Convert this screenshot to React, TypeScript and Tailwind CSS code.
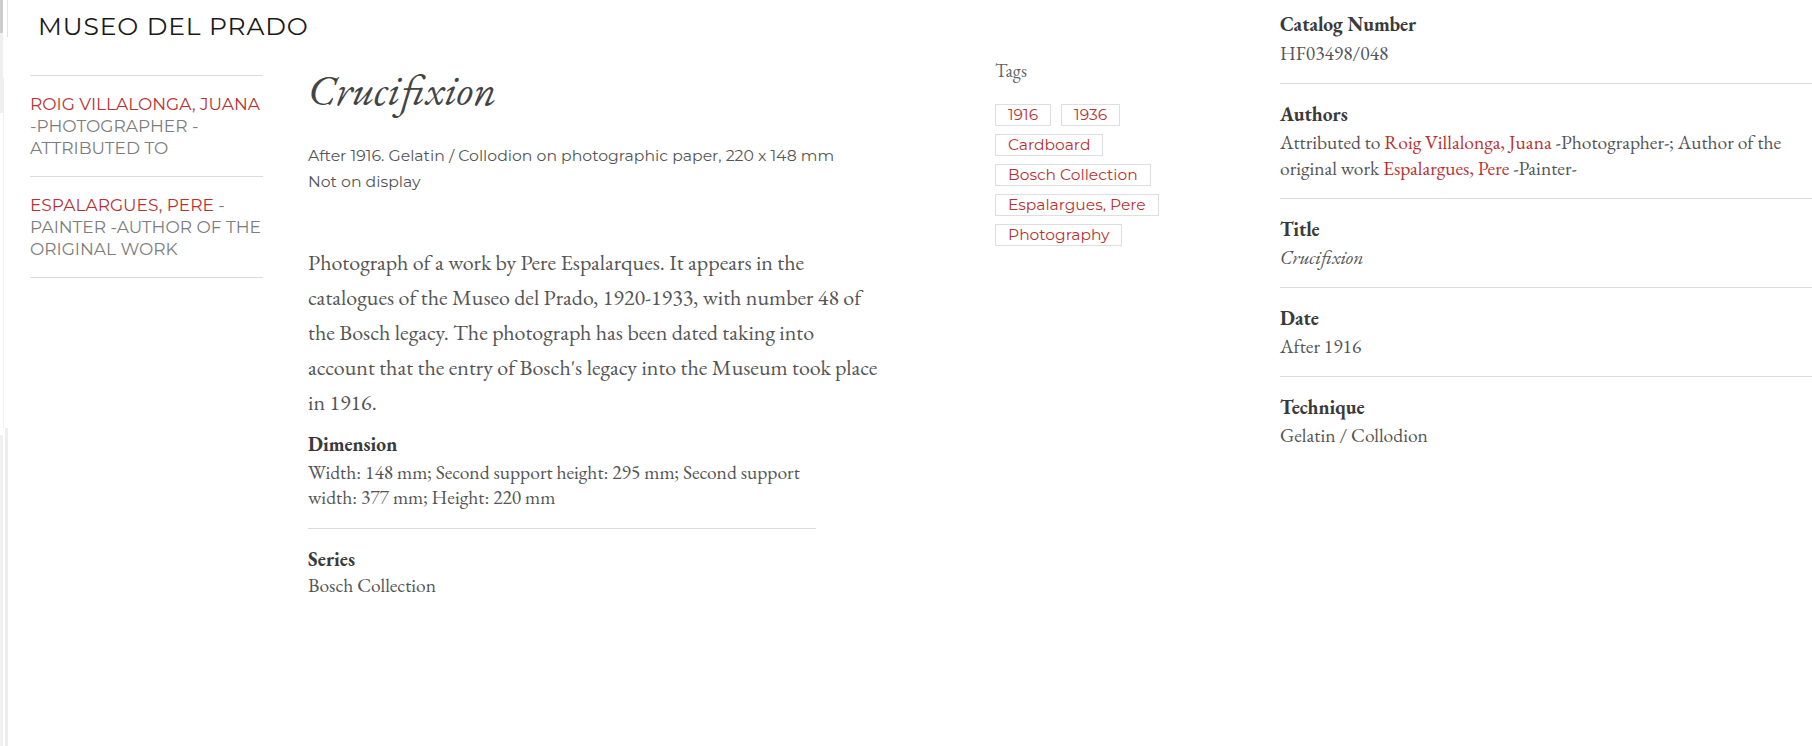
import React from "react";

const SANS = "font-['Montserrat','Noto_Sans',sans-serif]";
const SERIF = "font-['EB_Garamond','Liberation_Serif',serif]";

function SideItem({ lines }: { lines: React.ReactNode[] }) {
  return (
    <div className="border-b border-[#dcdcdc] pt-[17px] pb-[17px]">
      {lines.map((l, i) => (
        <div key={i} className="whitespace-nowrap">
          {l}
        </div>
      ))}
    </div>
  );
}

function Tag({ children }: { children: React.ReactNode }) {
  return (
    <span className="inline-flex h-[22px] items-center border border-[#dedede] px-[12px] text-[15.5px] leading-none text-[#b83232] whitespace-nowrap">
      {children}
    </span>
  );
}

function InfoSection({
  label,
  children,
  first,
}: {
  label: string;
  children: React.ReactNode;
  first?: boolean;
}) {
  return (
    <div
      className={`border-b border-[#dcdcdc] ${first ? "pt-[10px] pb-[17px]" : "pt-[16px] pb-[17px]"}`}
    >
      <div className="text-[19.5px] font-bold leading-[28px] text-[#3a3a3a]">{label}</div>
      <div className={`${first ? "mt-[2px]" : "mt-[1px]"} text-[19.5px] leading-[26px] text-[#555]`}>
        {children}
      </div>
    </div>
  );
}

export default function App() {
  return (
    <div className={`relative flex min-h-[746px] w-[1812px] bg-white ${SERIF}`}>
      {/* edge artifacts */}
      <div className="pointer-events-none absolute left-0 top-0 h-[33px] w-[3px] bg-[#cdcdcd]" />
      <div className="pointer-events-none absolute left-0 top-[33px] h-[80px] w-[3px] bg-[#efefef]" />
      <div className="pointer-events-none absolute left-[7px] top-0 h-[37px] w-[1px] bg-[#e4e4e4]" />
      <div className="pointer-events-none absolute left-[3px] top-[78px] h-[350px] w-[1px] bg-[#efefef]" />
      <div className="pointer-events-none absolute left-0 top-[435px] h-[311px] w-[3px] bg-[#f0f0f0]" />
      <div className="pointer-events-none absolute left-[5px] top-[428px] h-[318px] w-[3px] bg-[#ededed]" />

      {/* left part */}
      <div className="flex w-[1280px] shrink-0 flex-col">
        <div className="h-[52px] pl-[38px] pt-[11px]">
          <div className={`${SANS} text-[25px] leading-[30px] tracking-[0.9px] text-[#1a1a1a]`}>
            MUSEO DEL PRADO
          </div>
        </div>

        <div className="flex items-start">
          {/* sidebar */}
          <div
            className={`ml-[30px] mt-[23px] w-[233px] shrink-0 border-t border-[#dcdcdc] ${SANS} text-[17px] leading-[22px] text-[#7d7d7d]`}
          >
            <SideItem
              lines={[
                <span className="text-[#b83232]">ROIG VILLALONGA, JUANA</span>,
                "-PHOTOGRAPHER -",
                "ATTRIBUTED TO",
              ]}
            />
            <SideItem
              lines={[
                <>
                  <span className="text-[#b83232]">ESPALARGUES, PERE</span> -
                </>,
                "PAINTER -AUTHOR OF THE",
                "ORIGINAL WORK",
              ]}
            />
          </div>

          {/* main */}
          <div className="ml-[45px] w-[620px] shrink-0">
            <h1 className="mt-[12px] text-[44px] italic leading-[52px] text-[#444]">Crucifixion</h1>
            <div className={`mt-[27px] ${SANS} text-[15.7px] leading-[26px] text-[#555]`}>
              <div>After 1916. Gelatin / Collodion on photographic paper, 220 x 148 mm</div>
              <div>Not on display</div>
            </div>
            <p className="mt-[50px] text-[22px] leading-[35px] text-[#555]">
              Photograph of a work by Pere Espalarques. It appears in the
              <br />
              catalogues of the Museo del Prado, 1920-1933, with number 48 of
              <br />
              the Bosch legacy. The photograph has been dated taking into
              <br />
              account that the entry of Bosch's legacy into the Museum took place
              <br />
              in 1916.
            </p>
            <div className="w-[508px]">
              <div className="mt-[10px] border-b border-[#dcdcdc] pb-[18px]">
                <div className="text-[19.5px] font-bold leading-[28px] text-[#3a3a3a]">Dimension</div>
                <div className="mt-[2px] text-[19.5px] leading-[25px] text-[#555]">
                  Width: 148 mm; Second support height: 295 mm; Second support
                  <br />
                  width: 377 mm; Height: 220 mm
                </div>
              </div>
              <div className="pt-[16px]">
                <div className="text-[19.5px] font-bold leading-[28px] text-[#3a3a3a]">Series</div>
                <div className="text-[19.5px] leading-[25px] text-[#555]">Bosch Collection</div>
              </div>
            </div>
          </div>

          {/* tags */}
          <div className="ml-[67px] mt-[6px] w-[200px] shrink-0">
            <div className="text-[18.5px] leading-[26px] text-[#666]">Tags</div>
            <div className={`mt-[20px] flex flex-wrap gap-x-[10px] gap-y-[8px] ${SANS}`}>
              <Tag>1916</Tag>
              <Tag>1936</Tag>
              <Tag>Cardboard</Tag>
              <Tag>Bosch Collection</Tag>
              <Tag>Espalargues, Pere</Tag>
              <Tag>Photography</Tag>
            </div>
          </div>
        </div>
      </div>

      {/* right column */}
      <div className="w-[532px] shrink-0">
        <InfoSection label="Catalog Number" first>
          HF03498/048
        </InfoSection>
        <InfoSection label="Authors">
          Attributed to <span className="text-[#b83232]">Roig Villalonga, Juana</span> -Photographer-; Author of the
          <br />
          original work <span className="text-[#b83232]">Espalargues, Pere</span> -Painter-
        </InfoSection>
        <InfoSection label="Title">
          <span className="italic">Crucifixion</span>
        </InfoSection>
        <InfoSection label="Date">After 1916</InfoSection>
        <div className="pt-[16px]">
          <div className="text-[19.5px] font-bold leading-[28px] text-[#3a3a3a]">Technique</div>
          <div className="mt-[1px] text-[19.5px] leading-[26px] text-[#555]">Gelatin / Collodion</div>
        </div>
      </div>
    </div>
  );
}
